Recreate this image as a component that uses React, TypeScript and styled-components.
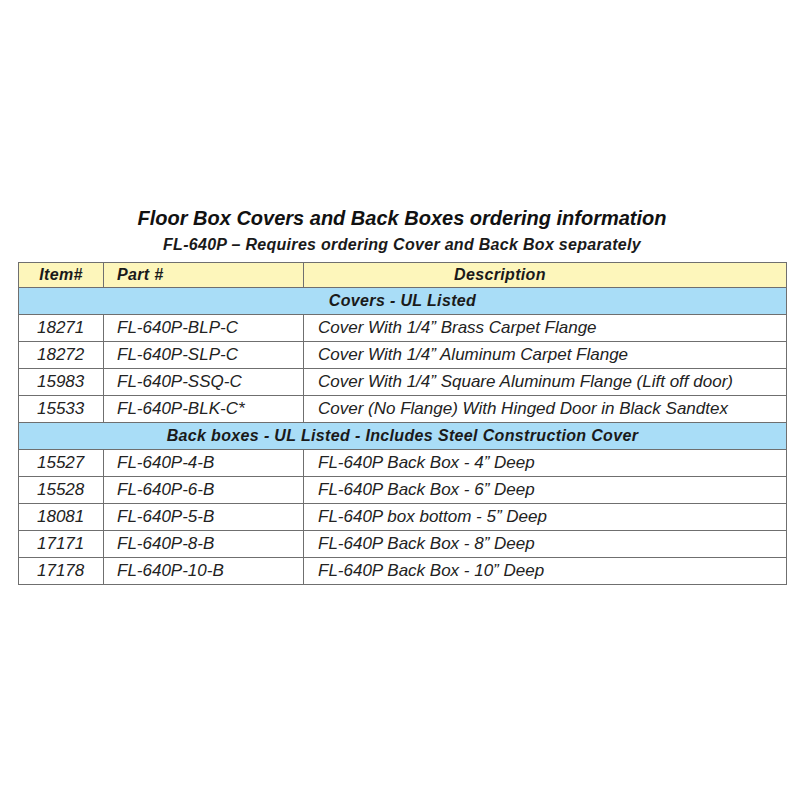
import React from "react";
import styled, { createGlobalStyle } from "styled-components";

const GlobalStyle = createGlobalStyle`
    body {
        margin: 0;
        background: #ffffff;
        font-family: "Liberation Sans", Arial, sans-serif;
        color: #1a1a1a;
    }
`;

const Page = styled.div`
    width: 800px;
    height: 800px;
    padding-top: 207px;
    box-sizing: border-box;
    display: flex;
    flex-direction: column;
    align-items: center;
`;

const Title = styled.h1`
    margin: 0 0 0 4px;
    font-size: 20px;
    line-height: 22px;
    font-weight: bold;
    font-style: italic;
    color: #111;
`;

const Subtitle = styled.h2`
    margin: 6px 0 0 4px;
    font-size: 16px;
    line-height: 20px;
    letter-spacing: 0.3px;
    font-weight: bold;
    font-style: italic;
    color: #1a1a1a;
`;

const Table = styled.table`
    margin: 7px 0 0 5px;
    width: 769px;
    border-collapse: collapse;
    border: 1px solid #6f6f6f;
    table-layout: fixed;
`;

const HeadRow = styled.tr`
    background: #fdf6bb;
`;

const HeadCell = styled.th<{ $pad?: number; $center?: boolean }>`
    height: 24px;
    padding: 0 0 0 ${p => p.$pad ?? 0}px;
    border: 1px solid #6f6f6f;
    text-align: ${p => (p.$center ? "center" : "left")};
    font-size: 16px;
    letter-spacing: 0.35px;
    font-weight: bold;
    font-style: italic;
    color: #1a1a1a;
`;

const SectionRow = styled.tr`
    background: #a9ddf7;
`;

const SectionCell = styled.td`
    height: 26px;
    padding: 0;
    border: 1px solid #6f6f6f;
    text-align: center;
    font-size: 16px;
    letter-spacing: 0.35px;
    font-weight: bold;
    font-style: italic;
    color: #1a1a1a;
`;

const DataCell = styled.td<{ $pad: number }>`
    height: 26px;
    padding: 0 0 0 ${p => p.$pad}px;
    border: 1px solid #6f6f6f;
    font-size: 17px;
    font-style: italic;
    color: #222;
    white-space: nowrap;
`;

interface IItem {
    item: string;
    part: string;
    desc: string;
}

const covers: IItem[] = [
    { item: "18271", part: "FL-640P-BLP-C", desc: "Cover With 1/4\u201D Brass Carpet Flange" },
    { item: "18272", part: "FL-640P-SLP-C", desc: "Cover With 1/4\u201D Aluminum Carpet Flange" },
    { item: "15983", part: "FL-640P-SSQ-C", desc: "Cover With 1/4\u201D Square Aluminum Flange (Lift off door)" },
    { item: "15533", part: "FL-640P-BLK-C*", desc: "Cover (No Flange) With Hinged Door in Black Sandtex" },
];

const backBoxes: IItem[] = [
    { item: "15527", part: "FL-640P-4-B", desc: "FL-640P Back Box - 4\u201D Deep" },
    { item: "15528", part: "FL-640P-6-B", desc: "FL-640P Back Box - 6\u201D Deep" },
    { item: "18081", part: "FL-640P-5-B", desc: "FL-640P box bottom - 5\u201D Deep" },
    { item: "17171", part: "FL-640P-8-B", desc: "FL-640P Back Box - 8\u201D Deep" },
    { item: "17178", part: "FL-640P-10-B", desc: "FL-640P Back Box - 10\u201D Deep" },
];

function ItemRow({ item, part, desc }: IItem) {
    return (
        <tr>
            <DataCell $pad={18}>{item}</DataCell>
            <DataCell $pad={13}>{part}</DataCell>
            <DataCell $pad={14}>{desc}</DataCell>
        </tr>
    );
}

export default function App() {
    return (
        <>
            <GlobalStyle />
            <Page>
                <Title>Floor Box Covers and Back Boxes ordering information</Title>
                <Subtitle>FL-640P – Requires ordering Cover and Back Box separately</Subtitle>
                <Table>
                    <colgroup>
                        <col style={{ width: 85 }} />
                        <col style={{ width: 200 }} />
                        <col />
                    </colgroup>
                    <thead>
                        <HeadRow>
                            <HeadCell $center>Item#</HeadCell>
                            <HeadCell $pad={13}>Part #</HeadCell>
                            <HeadCell $pad={150}>Description</HeadCell>
                        </HeadRow>
                    </thead>
                    <tbody>
                        <SectionRow>
                            <SectionCell colSpan={3}>Covers - UL Listed</SectionCell>
                        </SectionRow>
                        {covers.map(c => <ItemRow key={c.item} {...c} />)}
                        <SectionRow>
                            <SectionCell colSpan={3}>Back boxes - UL Listed - Includes Steel Construction Cover</SectionCell>
                        </SectionRow>
                        {backBoxes.map(b => <ItemRow key={b.item} {...b} />)}
                    </tbody>
                </Table>
            </Page>
        </>
    );
}
